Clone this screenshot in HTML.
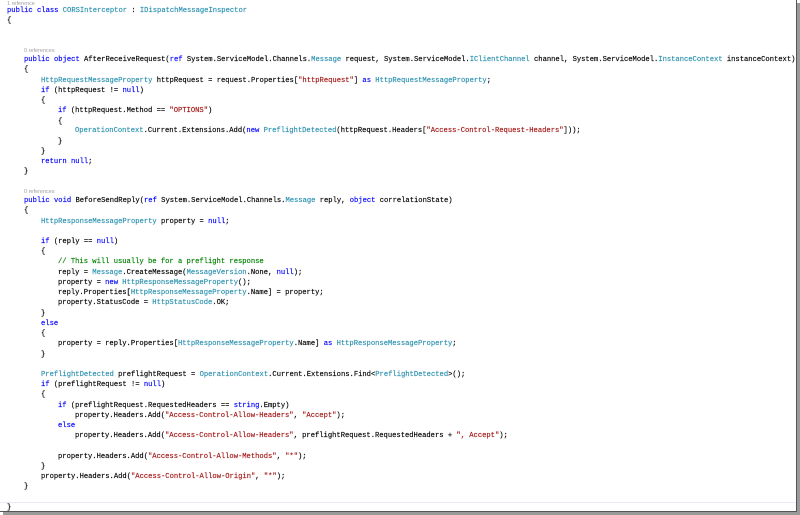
<!DOCTYPE html>
<html><head><meta charset="utf-8"><style>
body{margin:0;width:800px;height:515px;background:#fff;position:relative;overflow:hidden}
.f{position:absolute;left:0;top:0;width:796px;height:511px;border-right:1px solid #555;border-bottom:1px solid #555;background:#fff}
.sh{position:absolute;left:3px;top:3px;width:797px;height:512px;background:#9a9a9a}
.l{position:absolute;margin-top:1px;white-space:pre;font-family:"Liberation Mono",monospace;font-size:7.15px;line-height:10px;color:#000;-webkit-text-stroke:0.15px}
.r{position:absolute;margin-top:1px;white-space:pre;font-family:"Liberation Sans",sans-serif;font-size:5.5px;line-height:6px;color:#a0a0a0}
.k{color:#0000ff}.t{color:#2b91af}.s{color:#a31515}.c{color:#008000}
.sep{position:absolute;left:0;top:502px;width:796px;height:1px;background:#ecebf5}
</style></head><body>
<div class="sh"></div>
<div class="f">
<div class="sep"></div>
<div class="r" style="left:7px;top:0px">1 reference</div>
<div class="l" style="left:7px;top:5px"><span class="k">public</span> <span class="k">class</span> <span class="t">CORSInterceptor</span> : <span class="t">IDispatchMessageInspector</span></div>
<div class="l" style="left:7px;top:15px">{</div>
<div class="r" style="left:24px;top:47px">0 references</div>
<div class="l" style="left:24px;top:54px"><span class="k">public</span> <span class="k">object</span> AfterReceiveRequest(<span class="k">ref</span> System.ServiceModel.Channels.<span class="t">Message</span> request, System.ServiceModel.<span class="t">IClientChannel</span> channel, System.ServiceModel.<span class="t">InstanceContext</span> instanceContext)</div>
<div class="l" style="left:24px;top:64px">{</div>
<div class="l" style="left:41px;top:75px"><span class="t">HttpRequestMessageProperty</span> httpRequest = request.Properties[<span class="s">"httpRequest"</span>] <span class="k">as</span> <span class="t">HttpRequestMessageProperty</span>;</div>
<div class="l" style="left:41px;top:85px"><span class="k">if</span> (httpRequest != <span class="k">null</span>)</div>
<div class="l" style="left:41px;top:95px">{</div>
<div class="l" style="left:58px;top:105px"><span class="k">if</span> (httpRequest.Method == <span class="s">"OPTIONS"</span>)</div>
<div class="l" style="left:58px;top:116px">{</div>
<div class="l" style="left:75px;top:125px"><span class="t">OperationContext</span>.Current.Extensions.Add(<span class="k">new</span> <span class="t">PreflightDetected</span>(httpRequest.Headers[<span class="s">"Access-Control-Request-Headers"</span>]));</div>
<div class="l" style="left:58px;top:136px">}</div>
<div class="l" style="left:41px;top:146px">}</div>
<div class="l" style="left:41px;top:156px"><span class="k">return</span> <span class="k">null</span>;</div>
<div class="l" style="left:24px;top:166px">}</div>
<div class="r" style="left:24px;top:188px">0 references</div>
<div class="l" style="left:24px;top:195px"><span class="k">public</span> <span class="k">void</span> BeforeSendReply(<span class="k">ref</span> System.ServiceModel.Channels.<span class="t">Message</span> reply, <span class="k">object</span> correlationState)</div>
<div class="l" style="left:24px;top:205px">{</div>
<div class="l" style="left:41px;top:216px"><span class="t">HttpResponseMessageProperty</span> property = <span class="k">null</span>;</div>
<div class="l" style="left:41px;top:236px"><span class="k">if</span> (reply == <span class="k">null</span>)</div>
<div class="l" style="left:41px;top:246px">{</div>
<div class="l" style="left:58px;top:256px"><span class="c">// This will usually be for a preflight response</span></div>
<div class="l" style="left:58px;top:267px">reply = <span class="t">Message</span>.CreateMessage(<span class="t">MessageVersion</span>.None, <span class="k">null</span>);</div>
<div class="l" style="left:58px;top:277px">property = <span class="k">new</span> <span class="t">HttpResponseMessageProperty</span>();</div>
<div class="l" style="left:58px;top:287px">reply.Properties[<span class="t">HttpResponseMessageProperty</span>.Name] = property;</div>
<div class="l" style="left:58px;top:297px">property.StatusCode = <span class="t">HttpStatusCode</span>.OK;</div>
<div class="l" style="left:41px;top:308px">}</div>
<div class="l" style="left:41px;top:318px"><span class="k">else</span></div>
<div class="l" style="left:41px;top:328px">{</div>
<div class="l" style="left:58px;top:338px">property = reply.Properties[<span class="t">HttpResponseMessageProperty</span>.Name] <span class="k">as</span> <span class="t">HttpResponseMessageProperty</span>;</div>
<div class="l" style="left:41px;top:349px">}</div>
<div class="l" style="left:41px;top:369px"><span class="t">PreflightDetected</span> preflightRequest = <span class="t">OperationContext</span>.Current.Extensions.Find&lt;<span class="t">PreflightDetected</span>&gt;();</div>
<div class="l" style="left:41px;top:379px"><span class="k">if</span> (preflightRequest != <span class="k">null</span>)</div>
<div class="l" style="left:41px;top:389px">{</div>
<div class="l" style="left:58px;top:400px"><span class="k">if</span> (preflightRequest.RequestedHeaders == <span class="k">string</span>.Empty)</div>
<div class="l" style="left:75px;top:410px">property.Headers.Add(<span class="s">"Access-Control-Allow-Headers"</span>, <span class="s">"Accept"</span>);</div>
<div class="l" style="left:58px;top:420px"><span class="k">else</span></div>
<div class="l" style="left:75px;top:430px">property.Headers.Add(<span class="s">"Access-Control-Allow-Headers"</span>, preflightRequest.RequestedHeaders + <span class="s">", Accept"</span>);</div>
<div class="l" style="left:58px;top:451px">property.Headers.Add(<span class="s">"Access-Control-Allow-Methods"</span>, <span class="s">"*"</span>);</div>
<div class="l" style="left:41px;top:461px">}</div>
<div class="l" style="left:41px;top:471px">property.Headers.Add(<span class="s">"Access-Control-Allow-Origin"</span>, <span class="s">"*"</span>);</div>
<div class="l" style="left:24px;top:481px">}</div>
<div class="l" style="left:7px;top:502px">}</div>
</div>
</body></html>
